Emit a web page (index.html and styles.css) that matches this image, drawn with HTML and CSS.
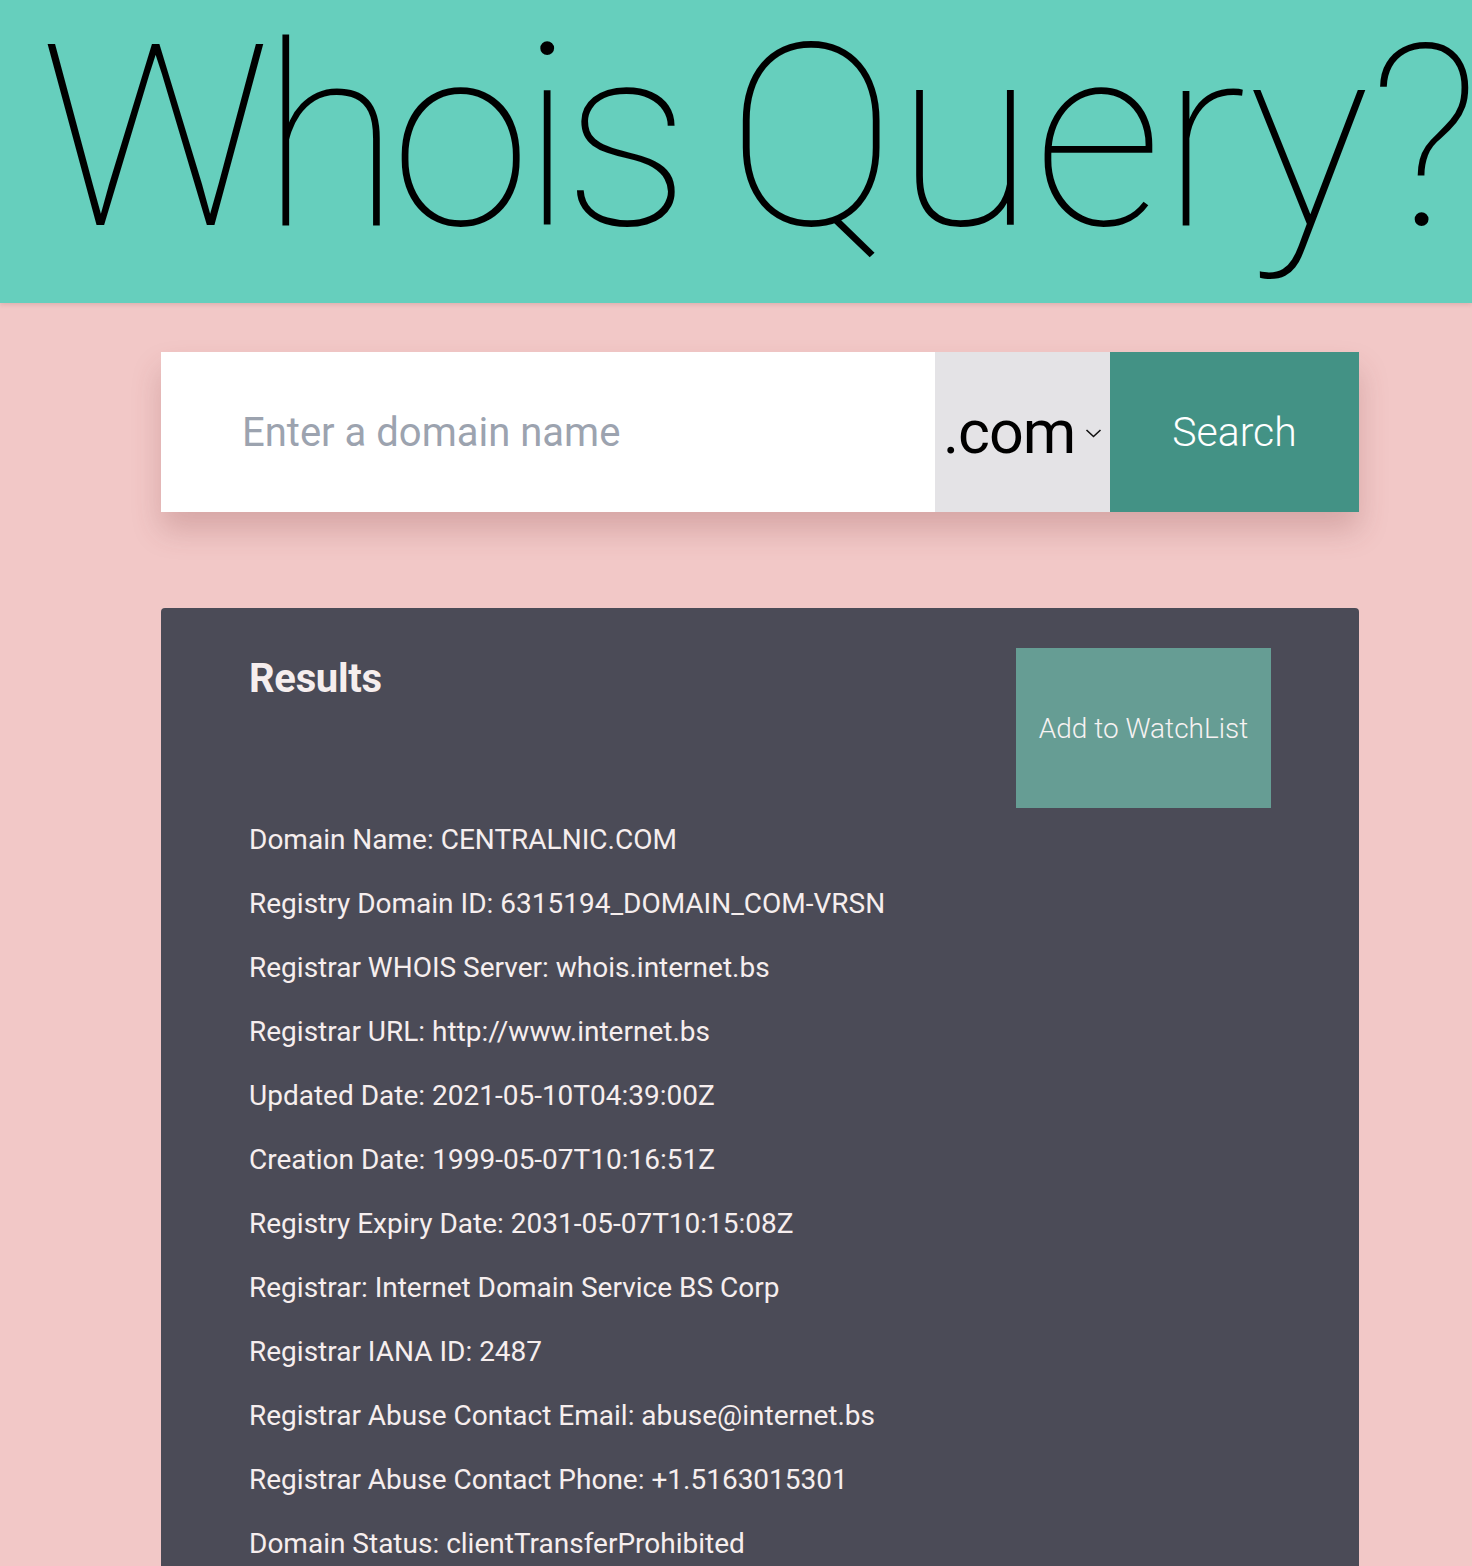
FILE: index.html
```html
<!DOCTYPE html>
<html lang="en">
<head>
<meta charset="utf-8">
<title>Whois Query?</title>
<link rel="stylesheet" href="styles.css">
</head>
<body>
<header class="hero">
  <h1 class="hero-title"><span class="hero-w1">Whois</span> <span class="hero-w2">Query?</span></h1>
</header>
<main class="main">
  <form class="search">
    <input class="search-input" type="text" placeholder="Enter a domain name">
    <div class="tld">
      <span class="tld-value">.com</span>
      <svg class="tld-chevron" width="17" height="9" viewBox="0 0 17 9"><path d="M1.5 1 L8.5 7.5 L15.5 1" fill="none" stroke="#111" stroke-width="1.6"/></svg>
    </div>
    <button class="search-btn" type="button">Search</button>
  </form>
  <section class="results">
    <div class="results-head">
      <h2 class="results-title">Results</h2>
      <button class="watch-btn" type="button">Add to WatchList</button>
    </div>
    <ul class="rows">
      <li>Domain Name: CENTRALNIC.COM</li>
      <li>Registry Domain ID: 6315194_DOMAIN_COM-VRSN</li>
      <li>Registrar WHOIS Server: whois.internet.bs</li>
      <li>Registrar URL: http://www.internet.bs</li>
      <li>Updated Date: 2021-05-10T04:39:00Z</li>
      <li>Creation Date: 1999-05-07T10:16:51Z</li>
      <li>Registry Expiry Date: 2031-05-07T10:15:08Z</li>
      <li>Registrar: Internet Domain Service BS Corp</li>
      <li>Registrar IANA ID: 2487</li>
      <li>Registrar Abuse Contact Email: abuse@internet.bs</li>
      <li>Registrar Abuse Contact Phone: +1.5163015301</li>
      <li>Domain Status: clientTransferProhibited</li>
    </ul>
  </section>
</main>
</body>
</html>
```

FILE: styles.css
```css
html, body {
  margin: 0;
  padding: 0;
}
body {
  background: #f2c8c7;
  font-family: Roboto, "Liberation Sans", sans-serif;
  overflow: hidden;
}
.hero {
  background: #66cfbd;
  height: 303px;
  overflow: hidden;
  box-shadow: 0 2px 4px rgba(120, 60, 60, 0.15);
  position: relative;
  z-index: 1;
}
.hero-title {
  margin: 0;
  padding-left: 40px;
  font-family: Roboto, "Liberation Sans", sans-serif;
  font-weight: 100;
  font-size: 255px;
  line-height: 276px;
  word-spacing: -15px;
  color: #000;
  white-space: nowrap;
}
.hero-w1 {
  letter-spacing: -10px;
}
.hero-w2 {
  letter-spacing: -1px;
}
.main {
  width: 1198px;
  margin-left: 161px;
  padding-top: 49px;
}
.search {
  display: flex;
  height: 160px;
  box-shadow: 0 18px 28px rgba(120, 50, 50, 0.22);
}
.search-input {
  flex: 0 0 774px;
  box-sizing: border-box;
  border: 0;
  outline: none;
  background: #fff;
  padding: 0 0 0 81px;
  font-family: Roboto, sans-serif;
  font-size: 40px;
  color: #222;
}
.search-input::placeholder {
  color: #9ca3af;
}
.tld {
  flex: 0 0 175px;
  background: #e4e3e6;
  display: flex;
  align-items: center;
  padding-left: 8px;
  box-sizing: border-box;
  gap: 10px;
}
.tld-value {
  font-family: Roboto, sans-serif;
  font-size: 61px;
  color: #000;
  letter-spacing: -1px;
}
.tld-chevron {
  margin-top: 2px;
}
.search-btn {
  flex: 1;
  border: 0;
  background: #439285;
  color: #fff;
  font-family: Roboto, sans-serif;
  font-weight: 300;
  font-size: 41px;
  padding: 0;
}
.results {
  margin-top: 96px;
  background: #4b4b57;
  border-radius: 4px 4px 0 0;
  padding: 40px 88px 40px 88px;
  color: #f6eeee;
}
.results-head {
  display: flex;
  justify-content: space-between;
  align-items: flex-start;
}
.results-title {
  margin: 0;
  font-size: 40px;
  font-weight: 700;
  line-height: 62px;
  letter-spacing: -0.3px;
}
.watch-btn {
  width: 255px;
  height: 160px;
  border: 0;
  background: #669d94;
  color: #f6f2f2;
  font-family: Roboto, sans-serif;
  font-weight: 300;
  font-size: 28px;
  padding: 0;
}
.rows {
  list-style: none;
  margin: 0;
  padding: 0;
}
.rows li {
  font-size: 28px;
  line-height: 64px;
}
```
